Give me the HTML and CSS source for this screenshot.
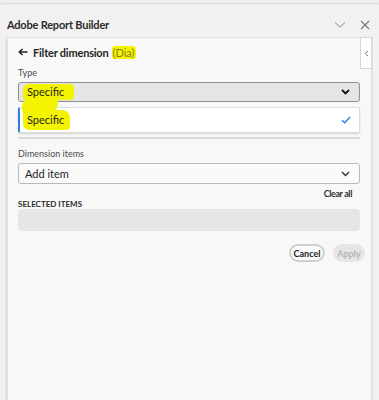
FILE: index.html
```html
<!DOCTYPE html>
<html>
<head>
<meta charset="utf-8">
<link rel="stylesheet" href="styles.css">
</head>
<body>
<div class="topstrip"></div>
<div class="titlebar">
  <span class="title">Adobe Report Builder</span>
  <div class="winbtns">
    <svg width="12" height="8" viewBox="0 0 12 8"><path d="M1 1.5 L6 6 L11 1.5" fill="none" stroke="#8a8a8a" stroke-width="1"/></svg>
    <svg width="10" height="10" viewBox="0 0 10 10"><path d="M1 1 L9 9 M9 1 L1 9" fill="none" stroke="#7a7a7a" stroke-width="1.1"/></svg>
  </div>
</div>
<div class="panel">
  <div class="tab"><svg width="5" height="7" viewBox="0 0 5 7"><path d="M4 0.8 L1.3 3.5 L4 6.2" fill="none" stroke="#666" stroke-width="1"/></svg></div>
  <div class="content">
    <div class="header">
      <svg class="back" width="10" height="8" viewBox="0 0 10 8"><path d="M9.5 4 H1.5 M4.5 1 L1.3 4 L4.5 7" fill="none" stroke="#222" stroke-width="1.5"/></svg>
      <span class="htext">Filter dimension</span>
      <span class="mark hmark">(Dia)</span>
    </div>
    <div class="label">Type</div>
    <div class="select sel-type">
      <span class="mark m1">Specific</span>
      <svg class="chev" width="9" height="6" viewBox="0 0 9 6"><path d="M1 1 L4.5 4.5 L8 1" fill="none" stroke="#111" stroke-width="1.8"/></svg>
    </div>
    <div class="menu">
      <span class="mark m2">Specific</span>
      <svg width="10" height="8" viewBox="0 0 10 8"><path d="M1 4.2 L3.8 6.8 L9 1" fill="none" stroke="#2f7fe0" stroke-width="1.5"/></svg>
      <div class="blob"></div>
    </div>
    <div class="divider"></div>
    <div class="label label2">Dimension items</div>
    <div class="select sel-add">
      <span>Add item</span>
      <svg class="chev" width="9" height="6" viewBox="0 0 9 6"><path d="M1 1 L4.5 4.5 L8 1" fill="none" stroke="#333" stroke-width="1.4"/></svg>
    </div>
    <div class="clearrow"><span class="clear">Clear all</span></div>
    <div class="sectitle">SELECTED ITEMS</div>
    <div class="selbox"></div>
    <div class="actions">
      <button class="btn cancel">Cancel</button>
      <button class="btn apply">Apply</button>
    </div>
  </div>
</div>
</body>
</html>
```

FILE: styles.css
```css
html, body {
  margin: 0;
  padding: 0;
  height: 400px;
  overflow: hidden;
}
body {
  background: #f1f1f1;
  font-family: Lato, "Open Sans", sans-serif;
  color: #222;
  display: flex;
  flex-direction: column;
}
.topstrip {
  height: 3px;
  flex: none;
  background: #edf0f1;
  box-shadow: 0 1px 2px rgba(0,0,0,0.12);
}
.titlebar {
  height: 34px;
  flex: none;
  display: flex;
  align-items: center;
  justify-content: space-between;
  padding: 9px 9px 0 7px;
  box-sizing: border-box;
}
.title {
  font-size: 11px;
  font-weight: 700;
  color: #2b2b2b;
  letter-spacing: -0.2px;
}
.winbtns {
  display: flex;
  align-items: center;
  gap: 14px;
}
.panel {
  position: relative;
  flex: 1;
  margin: 0 6px 0 5px;
  background: #f8f8f8;
  border-left: 3px solid #e3e3e3;
  border-right: 2px solid #e3e3e3;
  border-top: 1px solid #e0e0e0;
}
.tab {
  position: absolute;
  right: -1px;
  top: -1px;
  width: 10px;
  height: 30px;
  background: #fff;
  border: 1px solid #d6d6d6;
  display: flex;
  align-items: center;
  justify-content: center;
}
.content {
  padding: 7px 10px 0 10px;
  margin-right: 1px;
  display: flex;
  flex-direction: column;
}
.content > * { flex: none; }
.header {
  display: flex;
  align-items: center;
  height: 14px;
}
.back { margin-right: 5px; }
.htext {
  font-size: 11px;
  font-weight: 700;
  color: #1f1f1f;
  letter-spacing: -0.2px;
}
.mark {
  background: #f4f400;
  border-radius: 3px;
}
.hmark {
  font-size: 11px;
  margin-left: 3px;
  padding: 0 1px;
  color: #8a7d20;
}
.label {
  margin-top: 8px;
  font-size: 9px;
  color: #4a4a4a;
  height: 12px;
  line-height: 12px;
}
.select {
  margin-top: 3px;
  box-sizing: border-box;
  border-radius: 3px;
  display: flex;
  align-items: center;
  justify-content: space-between;
  padding: 0 9px 0 7px;
  font-size: 11px;
  line-height: 12px;
  color: #1f1f1f;
}
.sel-type {
  height: 20px;
  background: #e5e5e5;
  border: 1px solid #8f8f8f;
  padding-left: 4px;
}
.m1 {
  padding: 2px 10px 2px 4px;
  border-radius: 6px 4px 4px 2px;
}
.menu {
  position: relative;
  margin-top: 5px;
  height: 26px;
  box-sizing: border-box;
  background: #fff;
  border: 1px solid #dcdcdc;
  border-left: 2px solid #2f7fe0;
  border-radius: 2px;
  box-shadow: 0 1px 2px rgba(0,0,0,0.15);
  display: flex;
  align-items: center;
  justify-content: space-between;
  padding: 0 8px 0 3px;
  font-size: 11px;
  line-height: 12px;
  color: #1f1f1f;
}
.m2 {
  padding: 4px 6px 4px 4px;
  border-radius: 2px 8px 4px 6px;
  position: relative;
  z-index: 1;
}
.blob {
  position: absolute;
  left: 2px;
  top: -9px;
  width: 36px;
  height: 14px;
  background: #f4f400;
  border-radius: 8px 2px 10px 4px;
}
.divider {
  margin-top: 4px;
  height: 2px;
  background: #d9d9d9;
}
.label2 { margin-top: 9px; }
.sel-add {
  height: 21px;
  background: #fafafa;
  border: 1px solid #b9b9b9;
  padding-left: 6px;
}
.clearrow {
  display: flex;
  justify-content: flex-end;
  padding-right: 8px;
  margin-top: 5px;
  height: 10px;
  line-height: 10px;
}
.clear {
  font-size: 9px;
  font-weight: 700;
  color: #333;
  letter-spacing: -0.4px;
}
.sectitle {
  margin-top: 0;
  font-size: 8px;
  font-weight: 700;
  color: #2b2b2b;
  height: 10px;
  line-height: 10px;
}
.selbox {
  margin-top: 0;
  height: 22px;
  background: #e6e6e6;
  border-radius: 4px;
}
.actions {
  margin-top: 13px;
  margin-right: -5px;
  display: flex;
  justify-content: flex-end;
  gap: 8px;
}
.btn {
  font-family: Lato, "Open Sans", sans-serif;
  font-size: 9px;
  font-weight: 700;
  height: 18px;
  border-radius: 9px;
  padding: 0;
  box-sizing: border-box;
}
.cancel {
  width: 36px;
  background: #fafafa;
  border: 2px solid #cfcfcf;
  color: #222;
}
.apply {
  width: 32px;
  background: #e6e6e6;
  border: none;
  color: #b5b5b5;
}
```
